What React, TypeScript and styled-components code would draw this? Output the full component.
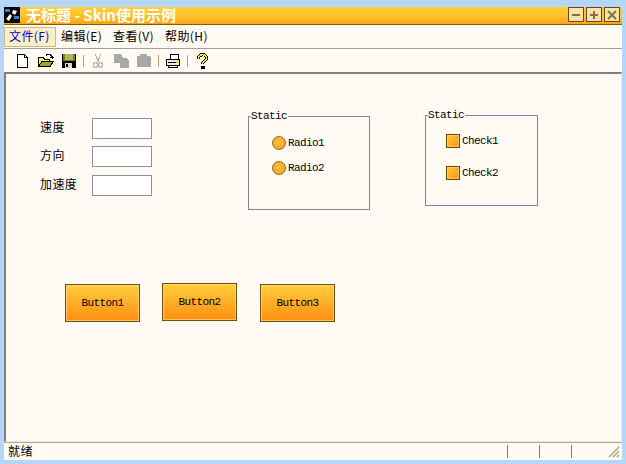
import React from "react";
import styled, { createGlobalStyle } from "styled-components";

const Global = createGlobalStyle`
  html, body { margin: 0; padding: 0; background: #a9d0f5; }
  body { width: 626px; height: 464px; overflow: hidden; }
`;

const Frame = styled.div`
  box-sizing: border-box;
  width: 626px;
  height: 464px;
  padding: 7px 4px 4px 4px;
  background: #b4d6f7;
  display: flex;
  flex-direction: column;
  font-family: "Noto Sans CJK SC", "Liberation Sans", sans-serif;
  color: #000;
`;

const TitleBar = styled.div`
  height: 18px;
  flex: none;
  box-sizing: border-box;
  display: flex;
  align-items: flex-start;
  background: linear-gradient(#ffd03a, #ffc02a 55%, #f8a414);
  border-bottom: 1px solid #8a5a00;
`;

const AppIcon = styled.svg`
  width: 16px;
  height: 16px;
  flex: none;
  margin-right: 6px;
`;

const TitleText = styled.span`
  color: #fff;
  font-size: 15px;
  font-weight: 700;
  line-height: 16px;
  flex: 1;
  white-space: nowrap;
`;

const CaptionButtons = styled.div`
  display: flex;
  margin-right: 2px;
`;

const CaptionButton = styled.div`
  box-sizing: border-box;
  width: 16px;
  height: 15px;
  margin-left: 2px;
  border: 1px solid #6b4a00;
  background: #f3e3b4;
  display: flex;
  align-items: center;
  justify-content: center;
  color: #8b7232;
`;

const MenuBar = styled.div`
  height: 23px;
  flex: none;
  display: flex;
  align-items: center;
  background: #fffaf2;
  border-bottom: 1px solid #a0a0a0;
`;

const MenuItem = styled.div<{ $active?: boolean }>`
  box-sizing: border-box;
  width: 52px;
  height: 20px;
  padding-left: ${(p) => (p.$active ? "4px" : "5px")};
  padding-top: ${(p) => (p.$active ? "0" : "1px")};
  font-size: 12px;
  line-height: 15px;
  letter-spacing: 0.4px;
  white-space: nowrap;
  color: ${(p) => (p.$active ? "#0000e0" : "#000")};
  background: ${(p) => (p.$active ? "#fdeec5" : "transparent")};
  border: ${(p) => (p.$active ? "1px solid #c9b98c" : "none")};
`;

const ToolBar = styled.div`
  height: 23px;
  flex: none;
  display: flex;
  align-items: center;
  padding-left: 11px;
  gap: 7px;
  background: #fffaf2;
`;

const ToolIcon = styled.svg`
  width: 16px;
  height: 16px;
  flex: none;
  shape-rendering: crispEdges;
`;

const ToolSep = styled.div`
  width: 1px;
  height: 12px;
  background: #c49a6c;
  margin: 0 -1px;
`;

const Client = styled.div`
  flex: 1;
  min-height: 0;
  box-sizing: border-box;
  background: #fffaf4;
  border-top: 2px solid #808080;
  border-left: 2px solid #808080;
  border-right: 1px solid #e8e8e8;
  border-bottom: 1px solid #e8e8e8;
  padding: 44px 0 0 34px;
`;

const TopRow = styled.div`
  display: flex;
  align-items: flex-start;
`;

const Fields = styled.div`
  display: grid;
  grid-template-columns: 52px 60px;
  grid-auto-rows: 21px;
  row-gap: 7px;
  width: 208px;
  flex: none;
`;

const FieldLabel = styled.span<{ $low?: boolean }>`
  font-size: 12px;
  line-height: 17px;
  letter-spacing: 0.4px;
  margin-top: ${(p) => (p.$low ? "1px" : "0")};
`;

const FieldInput = styled.div<{ $low?: boolean }>`
  box-sizing: border-box;
  width: 60px;
  height: 21px;
  margin-top: ${(p) => (p.$low ? "1px" : "0")};
  border: 1px solid #8f8fa0;
  background: #fff;
`;

const Group = styled.div<{ $w: number; $h: number; $top: number; $gap: number }>`
  position: relative;
  box-sizing: border-box;
  width: ${(p) => p.$w}px;
  height: ${(p) => p.$h}px;
  margin-top: ${(p) => p.$top}px;
  margin-right: ${(p) => p.$gap}px;
  border: 1px solid #7d859f;
  flex: none;
`;

const GroupLabel = styled.span`
  position: absolute;
  left: 2px;
  top: -7px;
  padding: 0 1px 0 0;
  background: #fffaf4;
  font-family: "Liberation Mono", monospace;
  font-size: 11px;
  letter-spacing: -0.6px;
  line-height: 12px;
`;

const OptionList = styled.div<{ $pad: string; $gap: number }>`
  display: flex;
  flex-direction: column;
  gap: ${(p) => p.$gap}px;
  padding: ${(p) => p.$pad};
`;

const Option = styled.div`
  display: flex;
  align-items: center;
  gap: 2px;
  height: 14px;
  font-family: "Liberation Mono", monospace;
  font-size: 11px;
  letter-spacing: -0.6px;
  white-space: nowrap;
`;

const RadioDot = styled.span`
  box-sizing: border-box;
  width: 14px;
  height: 14px;
  border-radius: 50%;
  border: 1px solid #8a6a28;
  background: radial-gradient(circle at 45% 40%, #ffc13a, #fb9a12);
`;

const CheckBox = styled.span`
  box-sizing: border-box;
  width: 14px;
  height: 14px;
  border: 1px solid #6b4a00;
  box-shadow: inset 0 0 0 1px rgba(255, 225, 150, 0.5);
  background: linear-gradient(135deg, #ffc845, #fb9510);
`;

const ButtonRow = styled.div`
  display: flex;
  align-items: flex-start;
  margin: 73px 0 0 25px;
`;

const SkinButton = styled.div<{ $up?: boolean; $gap: number }>`
  box-sizing: border-box;
  width: 75px;
  height: 38px;
  margin-right: ${(p) => p.$gap}px;
  margin-top: ${(p) => (p.$up ? "0" : "1px")};
  border: 1px solid #6b4f10;
  box-shadow: inset 0 0 0 1px rgba(255, 225, 150, 0.6);
  background: linear-gradient(#ffce3c, #ff8f10);
  display: flex;
  align-items: center;
  justify-content: center;
  font-family: "Liberation Mono", monospace;
  font-size: 11px;
  letter-spacing: -0.6px;
`;

const StatusBar = styled.div`
  height: 18px;
  flex: none;
  box-sizing: border-box;
  display: flex;
  align-items: center;
  background: #fffaf2;
  border-top: 1px solid #bda878;
  font-size: 12px;
  padding-left: 4px;
`;

const StatusText = styled.span`
  flex: 1;
  line-height: 14px;
  margin-bottom: 2px;
  letter-spacing: 0.4px;
`;

const StatusCell = styled.div`
  box-sizing: border-box;
  width: 32px;
  height: 13px;
  border-left: 1px solid #808090;
`;

const Grip = styled.svg`
  width: 15px;
  height: 15px;
  margin-right: 1px;
  margin-left: 3px;
  flex: none;
`;

export default function App() {
  return (
    <>
      <Global />
      <Frame>
        <TitleBar>
          <AppIcon viewBox="0 0 16 16">
            <rect width="16" height="16" fill="#000" />
            <path d="M1 2h5v3H1zM10 9h5v3h-5z" fill="#1a8ce0" />
            <path d="M2 12l4-5 2 2-3 5zM9 3l4 1-2 4-3-2z" fill="#fff" />
          </AppIcon>
          <TitleText>无标题 - Skin使用示例</TitleText>
          <CaptionButtons>
            <CaptionButton>
              <svg width="10" height="10" viewBox="0 0 10 10">
                <path d="M1 5h8" stroke="currentColor" strokeWidth="2" />
              </svg>
            </CaptionButton>
            <CaptionButton>
              <svg width="10" height="10" viewBox="0 0 10 10">
                <path d="M1 5h8M5 1v8" stroke="currentColor" strokeWidth="2" />
              </svg>
            </CaptionButton>
            <CaptionButton>
              <svg width="10" height="10" viewBox="0 0 10 10">
                <path d="M1 1l8 8M9 1l-8 8" stroke="currentColor" strokeWidth="2" />
              </svg>
            </CaptionButton>
          </CaptionButtons>
        </TitleBar>
        <MenuBar>
          <MenuItem $active>文件(F)</MenuItem>
          <MenuItem>编辑(E)</MenuItem>
          <MenuItem>查看(V)</MenuItem>
          <MenuItem>帮助(H)</MenuItem>
        </MenuBar>
        <ToolBar>
          <ToolIcon viewBox="0 0 16 16">
            <path d="M2.5 1.5h7l3 3v10h-10z" fill="#fff" stroke="#000" />
            <path d="M9.5 1.5v3h3" fill="none" stroke="#000" />
          </ToolIcon>
          <ToolIcon viewBox="0 0 16 16">
            <path d="M0.5 4.5h5l1 2h5v2H4l-3 5z" fill="#f2ec6a" stroke="#000" />
            <path d="M4 8.5h11.5l-3.5 5H0.5z" fill="#a8a020" stroke="#000" />
            <path d="M8 3V1.5h4l2 2v2M12 4.5h4" fill="none" stroke="#000" />
          </ToolIcon>
          <ToolIcon viewBox="0 0 16 16">
            <rect x="1" y="1" width="14" height="14" fill="#000" />
            <rect x="2" y="1" width="12" height="7" fill="#808000" />
            <rect x="4" y="1" width="8" height="6" fill="#b0b070" />
            <rect x="4" y="10" width="7" height="5" fill="#d8d8d8" />
            <rect x="5" y="11" width="2" height="3" fill="#000" />
          </ToolIcon>
          <ToolSep />
          <ToolIcon viewBox="0 0 16 16">
            <path d="M5 1l3.5 8M11 1L7.5 9" stroke="#b4b4b4" fill="none" />
            <circle cx="5.5" cy="12" r="2.2" stroke="#b4b4b4" fill="none" />
            <circle cx="10.5" cy="12" r="2.2" stroke="#b4b4b4" fill="none" />
          </ToolIcon>
          <ToolIcon viewBox="0 0 16 16">
            <path d="M1 1h7l2 4h4l2 3v7H7v-5H1z" fill="#a8a8a8" />
          </ToolIcon>
          <ToolIcon viewBox="0 0 16 16">
            <path d="M1 3h3V1h7v2h3v1h1v10H1z" fill="#a8a8a8" />
          </ToolIcon>
          <ToolSep />
          <ToolIcon viewBox="0 0 16 16">
            <path d="M5.5 1.5h8v5h-8z" fill="#fff" stroke="#000" />
            <path d="M1.5 6.5h13v6h-13z" fill="#e8e8e8" stroke="#000" />
            <path d="M3 9h8v1H3z" fill="#000" />
            <path d="M11 8h3v2h-3z" fill="#f0d020" />
            <path d="M3.5 12.5h9v2h-9z" fill="#fff" stroke="#000" />
          </ToolIcon>
          <ToolSep />
          <ToolIcon viewBox="0 0 16 16">
            <path d="M4.5 5.5C4.5 0.5 12.5 0.5 12.5 5C12.5 8 8.5 8 8.5 10.5" fill="none" stroke="#000" strokeWidth="3.2" />
            <path d="M4.5 5.5C4.5 0.5 12.5 0.5 12.5 5C12.5 8 8.5 8 8.5 10.5" fill="none" stroke="#ffe800" strokeWidth="1.5" />
            <rect x="7" y="12.5" width="3.5" height="3.5" fill="#000" />
          </ToolIcon>
        </ToolBar>
        <Client>
          <TopRow>
            <Fields>
              <FieldLabel>速度</FieldLabel>
              <FieldInput />
              <FieldLabel>方向</FieldLabel>
              <FieldInput />
              <FieldLabel $low>加速度</FieldLabel>
              <FieldInput $low />
            </Fields>
            <Group $w={122} $h={94} $top={-2} $gap={55}>
              <GroupLabel>Static</GroupLabel>
              <OptionList $pad="19px 0 0 23px" $gap={11}>
                <Option>
                  <RadioDot />
                  Radio1
                </Option>
                <Option>
                  <RadioDot />
                  Radio2
                </Option>
              </OptionList>
            </Group>
            <Group $w={113} $h={91} $top={-3} $gap={0}>
              <GroupLabel>Static</GroupLabel>
              <OptionList $pad="18px 0 0 20px" $gap={18}>
                <Option>
                  <CheckBox />
                  Check1
                </Option>
                <Option>
                  <CheckBox />
                  Check2
                </Option>
              </OptionList>
            </Group>
          </TopRow>
          <ButtonRow>
            <SkinButton $gap={22}>Button1</SkinButton>
            <SkinButton $up $gap={23}>
              Button2
            </SkinButton>
            <SkinButton $gap={0}>Button3</SkinButton>
          </ButtonRow>
        </Client>
        <StatusBar>
          <StatusText>就绪</StatusText>
          <StatusCell />
          <StatusCell />
          <StatusCell />
          <Grip viewBox="0 0 15 15">
            <path d="M13 3L3 13M13 7l-6 6M13 11l-2 2" stroke="#b0a070" strokeWidth="1.4" />
          </Grip>
        </StatusBar>
      </Frame>
    </>
  );
}
